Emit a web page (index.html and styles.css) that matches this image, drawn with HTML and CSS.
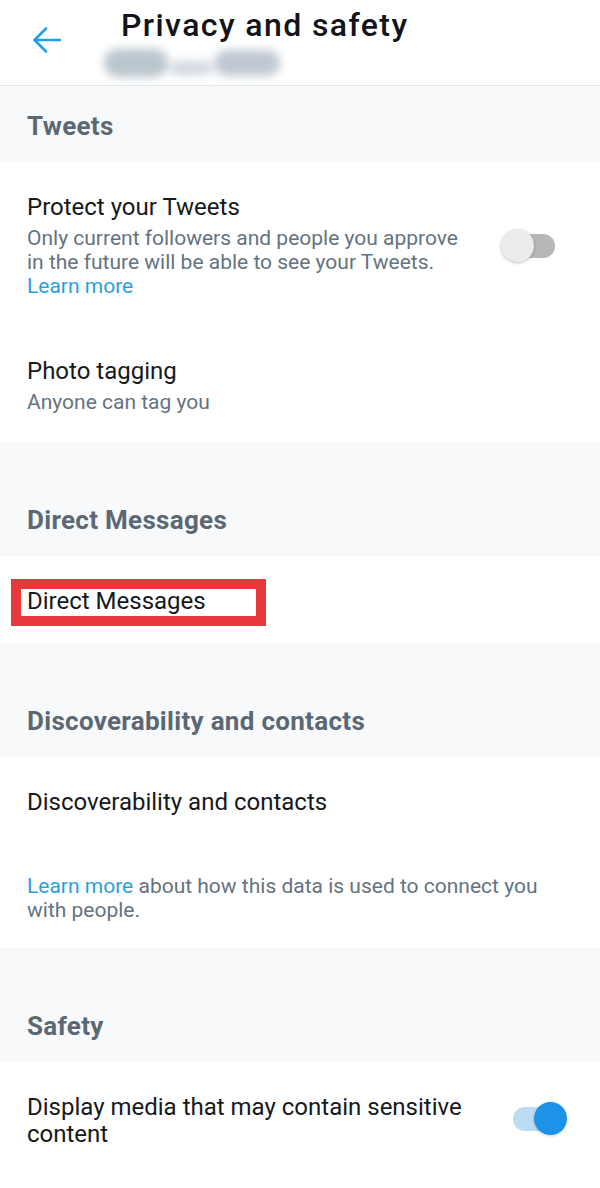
FILE: index.html
```html
<!DOCTYPE html>
<html lang="en">
<head>
<meta charset="utf-8">
<title>Privacy and safety</title>
<link rel="stylesheet" href="styles.css">
</head>
<body>
<header class="topbar">
  <div class="back">
    <svg width="30" height="28" viewBox="0 0 30 28" aria-hidden="true">
      <path d="M28 14 H3 M14 2.5 L2.5 14 L14 25.5" fill="none" stroke="#1da1f2" stroke-width="2.6" stroke-linecap="round" stroke-linejoin="round"/>
    </svg>
  </div>
  <div class="titles">
    <h1 class="title">Privacy and safety</h1>
    <div class="handle" aria-hidden="true">
      <span class="blob b1"></span><span class="blob b2"></span><span class="blob b3"></span>
    </div>
  </div>
</header>

<main>
  <section class="group">
    <h2 class="group-head">Tweets</h2>
    <div class="group-body">
      <div class="row">
        <div class="row-text">
          <div class="row-title">Protect your Tweets</div>
          <div class="row-desc">Only current followers and people you approve in the future will be able to see your Tweets.<span class="link block">Learn more</span></div>
        </div>
        <span class="toggle off"><span class="track"></span><span class="knob"></span></span>
      </div>
      <div class="row">
        <div class="row-text">
          <div class="row-title">Photo tagging</div>
          <div class="row-desc">Anyone can tag you</div>
        </div>
      </div>
    </div>
  </section>

  <section class="group">
    <h2 class="group-head spaced">Direct Messages</h2>
    <div class="group-body">
      <div class="row">
        <div class="row-text">
          <div class="row-title marked">Direct Messages<span class="mark"></span></div>
        </div>
      </div>
    </div>
  </section>

  <section class="group">
    <h2 class="group-head spaced">Discoverability and contacts</h2>
    <div class="group-body">
      <div class="row">
        <div class="row-text">
          <div class="row-title">Discoverability and contacts</div>
        </div>
      </div>
      <p class="note"><span class="link">Learn more</span> about how this data is used to connect you with people.</p>
    </div>
  </section>

  <section class="group">
    <h2 class="group-head spaced">Safety</h2>
    <div class="group-body">
      <div class="row">
        <div class="row-text">
          <div class="row-title tall">Display media that may contain sensitive content</div>
        </div>
        <span class="toggle on"><span class="track"></span><span class="knob"></span></span>
      </div>
    </div>
  </section>
</main>
</body>
</html>
```

FILE: styles.css
```css
* { box-sizing: border-box; }

html, body {
  margin: 0;
  padding: 0;
  background: #ffffff;
}

body {
  width: 600px;
  height: 1188px;
  overflow: hidden;
  font-family: Roboto, "Noto Sans", "Liberation Sans", sans-serif;
  color: #14171a;
}

/* ---------- top bar ---------- */
.topbar {
  display: flex;
  height: 86px;
  border-bottom: 1px solid #e3e8ec;
  background: #ffffff;
}

.back {
  width: 121px;
  padding: 26px 0 0 32px;
}

.back svg { display: block; }

.titles {
  display: flex;
  flex-direction: column;
  padding-top: 6px;
}

.title {
  margin: 0;
  font-size: 32px;
  line-height: 38px;
  font-weight: 500;
  letter-spacing: 1.4px;
  color: #111418;
}

.handle {
  display: flex;
  align-items: center;
  gap: 2px;
  height: 38px;
  margin-left: -17px;
  filter: blur(5px);
}

.blob {
  display: block;
  background: #a9b6c1;
  border-radius: 14px;
}

.b1 { width: 64px; height: 28px; opacity: 0.8; }
.b2 { width: 42px; height: 14px; opacity: 0.55; margin-top: 10px; }
.b3 { width: 66px; height: 26px; opacity: 0.75; }

/* ---------- groups ---------- */
.group {
  background: #f7f9fa;
}

.group-head {
  margin: 0;
  padding: 25px 27px 21px;
  font-size: 26px;
  line-height: 30px;
  font-weight: 700;
  letter-spacing: 0.3px;
  color: #5b6874;
}

.group-head.spaced {
  padding-top: 63px;
}

.group-body {
  background: #ffffff;
}

.row {
  display: flex;
  align-items: center;
  padding: 31px 0 28px 27px;
}

.row-text {
  width: 440px;
}

.row-title {
  font-size: 24px;
  line-height: 28px;
  color: #16191c;
}

.row-title.tall {
  line-height: 27px;
  padding-top: 1px;
}

.row-title.marked {
  position: relative;
  display: inline-block;
}

.mark {
  position: absolute;
  left: -16px;
  top: -8px;
  width: 255px;
  height: 47px;
  border: 10px solid #e8383b;
}

.row-desc {
  margin-top: 5px;
  font-size: 21px;
  line-height: 24px;
  color: #657380;
}

.link {
  color: #2a9fd8;
}

.link.block {
  display: block;
}

.note {
  margin: 0;
  padding: 30px 27px 26px;
  width: 573px;
  font-size: 21px;
  line-height: 24px;
  color: #657380;
}

/* ---------- toggles ---------- */
.toggle {
  position: relative;
  flex: none;
  width: 56px;
  height: 34px;
}

.toggle.off { margin-left: 34px; }
.toggle.on { margin-left: 44px; margin-top: -4px; }

.track {
  position: absolute;
  left: 2px;
  right: 2px;
  top: 5px;
  height: 24px;
  border-radius: 12px;
}

.knob {
  position: absolute;
  top: 0;
  width: 33px;
  height: 33px;
  border-radius: 50%;
}

.off .track { background: #b7b7b7; }
.off .knob {
  left: 0;
  background: #ececec;
  box-shadow: 0 1px 3px rgba(0, 0, 0, 0.25);
}

.on .track { background: #bcdcf3; }
.on .knob {
  right: 0;
  background: #1c93e6;
  box-shadow: 0 1px 3px rgba(0, 0, 0, 0.2);
}
```
